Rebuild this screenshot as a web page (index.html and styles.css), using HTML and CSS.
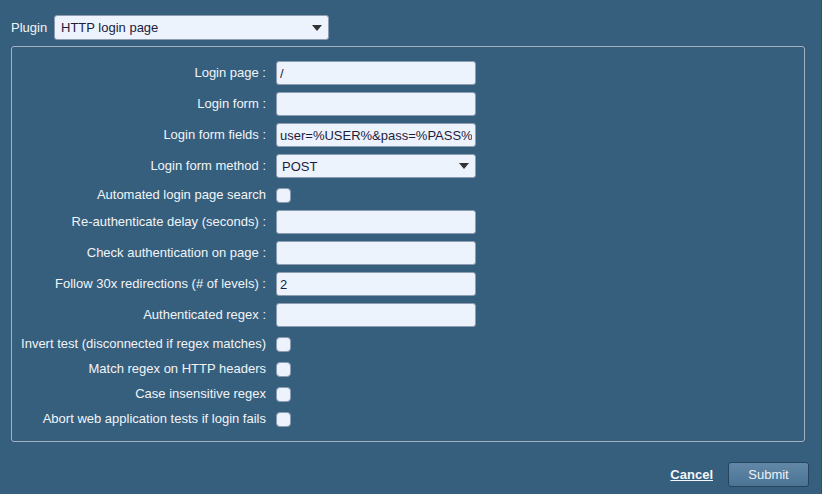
FILE: index.html
```html
<!DOCTYPE html>
<html>
<head>
<meta charset="utf-8">
<link rel="stylesheet" href="styles.css">
</head>
<body>
<div class="page">
  <div class="plugin-row">
    <span class="plugin-label">Plugin</span>
    <div class="select plugin-select">
      <span class="select-text">HTTP login page</span>
      <svg class="caret" width="10" height="6" viewBox="0 0 10 6"><path d="M0 0H10L5 6Z" fill="#333"/></svg>
    </div>
  </div>
  <div class="box">
    <div class="form">
      <label class="lbl">Login page :</label>
      <div class="field"><input class="inp" type="text" value="/"></div>

      <label class="lbl">Login form :</label>
      <div class="field"><input class="inp" type="text" value=""></div>

      <label class="lbl">Login form fields :</label>
      <div class="field"><input class="inp" type="text" value="user=%USER%&amp;pass=%PASS%"></div>

      <label class="lbl">Login form method :</label>
      <div class="field">
        <div class="select method-select">
          <span class="select-text">POST</span>
          <svg class="caret" width="10" height="6" viewBox="0 0 10 6"><path d="M0 0H10L5 6Z" fill="#333"/></svg>
        </div>
      </div>

      <label class="lbl cb-row">Automated login page search</label>
      <div class="field cb-row"><span class="cb"></span></div>

      <label class="lbl">Re-authenticate delay (seconds) :</label>
      <div class="field"><input class="inp" type="text" value=""></div>

      <label class="lbl">Check authentication on page :</label>
      <div class="field"><input class="inp" type="text" value=""></div>

      <label class="lbl">Follow 30x redirections (# of levels) :</label>
      <div class="field"><input class="inp" type="text" value="2"></div>

      <label class="lbl">Authenticated regex :</label>
      <div class="field"><input class="inp" type="text" value=""></div>

      <label class="lbl cb-row">Invert test (disconnected if regex matches)</label>
      <div class="field cb-row"><span class="cb"></span></div>

      <label class="lbl cb-row">Match regex on HTTP headers</label>
      <div class="field cb-row"><span class="cb"></span></div>

      <label class="lbl cb-row">Case insensitive regex</label>
      <div class="field cb-row"><span class="cb"></span></div>

      <label class="lbl cb-row">Abort web application tests if login fails</label>
      <div class="field cb-row"><span class="cb"></span></div>
    </div>
  </div>
  <div class="footer">
    <a class="cancel" href="#">Cancel</a>
    <button class="submit" type="button">Submit</button>
  </div>
</div>
</body>
</html>
```
FILE: styles.css
```css
html, body {
  margin: 0;
  padding: 0;
  background: #365f7e;
}
body {
  font-family: "Liberation Sans", Arial, sans-serif;
  font-size: 13px;
  color: #f2f4f7;
}
.page {
  width: 821px;
  height: 494px;
  border-right: 1px solid #2e536f;
  box-sizing: content-box;
}
.plugin-row {
  display: flex;
  align-items: center;
  padding: 15px 0 0 11px;
  height: 25px;
}
.plugin-label {
  width: 43px;
}
.select {
  box-sizing: border-box;
  display: flex;
  align-items: center;
  justify-content: space-between;
  background: #edf3fd;
  border: 1px solid #8d9cb0;
  border-radius: 3px;
  color: #1c1c3c;
  padding: 0 6px 0 6px;
}
.plugin-select {
  width: 275px;
  height: 25px;
}
.method-select {
  width: 200px;
  height: 24px;
  padding-left: 5px;
}
.caret {
  display: block;
}
.box {
  box-sizing: border-box;
  margin: 6px 0 0 11px;
  width: 794px;
  height: 396px;
  border: 1px solid #a3b2c2;
  border-radius: 3px;
  padding-top: 14px;
}
.form {
  display: grid;
  grid-template-columns: 254px 200px;
  column-gap: 10px;
  row-gap: 7px;
  align-items: center;
}
.lbl {
  text-align: right;
  white-space: nowrap;
  line-height: 24px;
}
.lbl.cb-row {
  line-height: 16px;
  padding-top: 2px;
}
.field {
  height: 24px;
  display: flex;
  align-items: center;
}
.field.cb-row {
  height: 18px;
  align-items: flex-end;
}
.inp {
  box-sizing: border-box;
  width: 200px;
  height: 24px;
  margin: 0;
  background: #edf3fd;
  border: 1px solid #8d9cb0;
  border-radius: 3px;
  font-family: "Liberation Sans", Arial, sans-serif;
  font-size: 13px;
  color: #1c1c3c;
  padding: 0 3px;
  outline: none;
}
.cb {
  box-sizing: border-box;
  display: block;
  width: 15px;
  height: 15px;
  background: #edf3fd;
  border: 1px solid #8d9cb0;
  border-radius: 4px;
}
.footer {
  display: flex;
  justify-content: flex-end;
  align-items: center;
  margin-top: 20px;
  padding-right: 12px;
  gap: 15px;
}
.cancel {
  color: #f4f6fa;
  font-weight: bold;
  text-decoration: underline;
}
.submit {
  box-sizing: border-box;
  width: 81px;
  height: 25px;
  border: 1px solid #24445e;
  border-radius: 3px;
  background: linear-gradient(#6388a7, #4a7394);
  color: #eef2f7;
  font-family: "Liberation Sans", Arial, sans-serif;
  font-size: 13px;
  padding: 0;
}
```
